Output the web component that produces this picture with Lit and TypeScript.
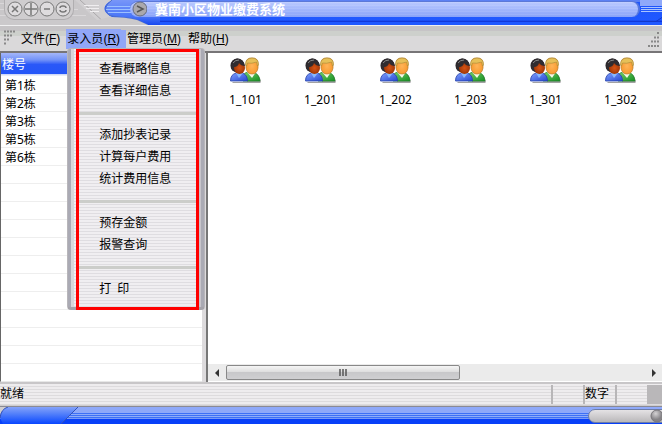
import { LitElement, html, svg, css } from "lit";
import { customElement } from "lit/decorators.js";

const windowControls = [
  { label: "关闭", glyph: svg`<path d="M5 5l6 6M11 5l-6 6"/>` },
  { label: "置顶", glyph: svg`<path d="M8 2v4M8 10v4M2 8h4M10 8h4M6 8h4M8 6v4"/>` },
  { label: "最小化", glyph: svg`<path d="M5 8h6"/>` },
  { label: "还原", glyph: svg`<path d="M5 7q0-2 3-2t3 2M5 9q0 2 3 2t3-2"/>` },
];

const menus = [
  { name: "文件", key: "F", open: false },
  { name: "录入员", key: "R", open: true },
  { name: "管理员", key: "M", open: false },
  { name: "帮助", key: "H", open: false },
];

const menuGroups = [
  ["查看概略信息", "查看详细信息"],
  ["添加抄表记录", "计算每户费用", "统计费用信息"],
  ["预存金额", "报警查询"],
  ["打\u2002印"],
];

const buildings = ["第1栋", "第2栋", "第3栋", "第5栋", "第6栋"];
const rooms = ["1_101", "1_201", "1_202", "1_203", "1_301", "1_302"];

@customElement("user-icon")
class UserIcon extends LitElement {
  static styles = css`
    :host { display: block; width: 32px; height: 28px; }
    svg { display: block; }
  `;
  render() {
    return html`<svg width="32" height="28" viewBox="2 0 32 28" aria-hidden="true">
      <defs>
        <linearGradient id="g" x2="1" y2="1"><stop offset="0" stop-color="#7bd070"/><stop offset="1" stop-color="#159020"/></linearGradient>
        <linearGradient id="b" x2="1" y2="1"><stop offset="0" stop-color="#7fa0ff"/><stop offset="1" stop-color="#2848d0"/></linearGradient>
        <radialGradient id="o"><stop offset="0" stop-color="#ffb458"/><stop offset="1" stop-color="#f89a30"/></radialGradient>
        <radialGradient id="r"><stop offset="0" stop-color="#d85414"/><stop offset="1" stop-color="#a03808"/></radialGradient>
      </defs>
      <path d="M19 25q-1-8 6-9 7 1 8 9l-1 1H5l-1-1z" fill="#666" opacity=".6"/>
      <path d="M15 24V18q2-3 7-3 7 0 9 5l1 4z" fill="url(#g)" stroke="#208028" stroke-width=".8"/>
      <path d="M19 15l5 6 4-6z" fill="#f5f8e8"/>
      <path d="M18 6q0-5 6-5t6 5v5q-1 6-6 6t-6-6z" fill="url(#o)" stroke="#b87828" stroke-width=".7"/>
      <path d="M17.500 8q0-7 6.500-7t6.500 7l-1 1-1-4q-5 2-9 1l-1 3z" fill="#e6c058" stroke="#a88838" stroke-width=".6"/>
      <path d="M2.500 24q0-7 6-8h6q5 2 5 8z" fill="url(#b)" stroke="#2440a8" stroke-width=".8"/>
      <path d="M8 16l3 5 4-5z" fill="#88b8ff"/>
      <circle cx="9.500" cy="8.500" r="7" fill="#282428"/>
      <ellipse cx="11.500" cy="11" rx="5.500" ry="6" fill="url(#r)"/>
      <path d="M3 10q0-7 6-8.500 6 0 8 7.500-4 0-6-3-1 4-5 4v4q-3-1-3-4z" fill="#302c30"/>
      <path d="M5 6q2-3 6-3" fill="none" stroke="#888" stroke-width="1"/>
    </svg>`;
  }
}

@customElement("app-root")
class AppRoot extends LitElement {
  static styles = css`
    :host {
      display: flex; flex-direction: column; min-height: 100vh; overflow: hidden;
      font: 12px/18px "Liberation Sans", "Noto Sans CJK SC", sans-serif;
      color: #000; background: #dcdadc;
    }
    * { box-sizing: border-box; }
    button { font: inherit; color: inherit; border: 0; padding: 0; background: none; text-align: left; white-space: nowrap; }

    .titlebar { display: flex; height: 25px; position: relative; background: linear-gradient(#5b80f4 0 2px, #1e55fa 2px, #2058ff 80%, #1238d8 86%, #2058ff 88%); }
    .titleart { position: absolute; left: 0; top: 0; }
    .controls {
      display: flex; position: relative; width: 70px; height: 20px; margin-left: 4px; padding: 1px 2px;
      border: 1px solid #b0aeb0; border-top: 0; border-radius: 0 0 10px 10px; background: #cfcdcf;
    }
    .controls button { width: 16px; height: 16px; }
    .controls svg { display: block; fill: #dedcde; stroke: #777; stroke-width: 1.5; }
    .caption {
      flex: 1; position: relative; display: flex; align-items: center; height: 16px; margin: 1px 0 0 56px;
      border-top: 1px solid #5b78d8; border-right: 2px solid #5678e0; border-radius: 8px;
      background: repeating-linear-gradient(#ffffff18 0 1px, transparent 1px 3px), linear-gradient(#bac9ff, #88a2f9);
    }
    .caption svg { flex: none; }
    h1 { margin: 0 0 0 8px; font-size: 13px; line-height: 16px; color: #fff; font-weight: 700; white-space: nowrap; }
    .tail { width: 22px; height: 25px; position: relative; background: linear-gradient(#8fa9fa 0 6px, transparent 6px); }
    .tail svg { display: block; }

    .menubar {
      position: relative; display: flex; align-items: center; height: 28px; padding: 2px 2px 0 3px;
      background: linear-gradient(#efeff0 0 1px, #c6c4c6 1px 6px, #cdd0cc 6px 11px, #dad9da 11px);
      border-bottom: 2px solid #777577;
    }
    .grip { width: 18px; height: 18px; }
    nav { display: flex; gap: 7px; flex: 1; }
    .entry { position: relative; }
    .entry.open > button { background: #91a7f7; box-shadow: 0 0 0 1px #91a7f7, 6px 0 0 0 #91a7f7; }
    .popup {
      position: absolute; z-index: 2; top: 18px; left: 0; width: 138px; height: 262px; padding: 0 6px 3px 9px;
      border: 1px solid #b8b6ba; border-radius: 4px;
      background: linear-gradient(90deg, #aaaab4 0 3px, #d8d6da 3px 6px, transparent 6px 130px, #c7c5cb 130px 133px, #aaaab4 133px),
        repeating-linear-gradient(#f0eef1 0 2px, #dfdde1 2px 3px);
      border-bottom: 3px solid #a5a3aa;
    }
    .marked { position: absolute; top: 0; left: 8px; width: 123px; border: 3px solid #f00; padding: 6px 0 7px; }
    .marked button { display: block; width: 100%; height: 22px; padding-left: 20px; line-height: 22px; }
    .marked hr { height: 3px; margin: 10px 0 9px; border: 0; background: #cccdca; }

    main { flex: 1; display: flex; min-height: 329px; background: #dddbdd; }
    .buildings {
      width: 202px; flex: none; border-left: 1px solid #666; border-bottom: 1px solid #e8e8e8;
      background: repeating-linear-gradient(#fff 0 17px, #eee 17px 18px) 0 23px no-repeat #fff;
    }
    table { width: 100%; border-collapse: collapse; }
    th { height: 23px; padding: 0 1px; text-align: left; font-weight: 400; color: #fff; background: linear-gradient(#a4b6fa, #7292f8 30%, #2a58f8 50%, #2456f8 90%, #e8ecf8 94%); }
    td { height: 18px; padding: 0 4px; line-height: 17px; font-family: "Noto Sans", "Noto Sans CJK SC", sans-serif; }
    .rooms { flex: 1; min-width: 0; margin-left: 4px; display: flex; flex-direction: column; background: #fff; border-left: 2px solid #777; }
    .grid { flex: 1; display: grid; grid-template-columns: repeat(auto-fill, 75px); align-content: start; padding-top: 4px; }
    .room { display: flex; flex-direction: column; align-items: center; gap: 6px; font-family: "Noto Sans", sans-serif; }
    .scroll { display: flex; align-items: center; height: 17px; background: #ebebeb; margin-bottom: 1px; }
    .scroll button { width: 18px; height: 16px; flex: none; }
    .scroll svg { display: block; margin: auto; }
    .track { flex: 1; }
    .thumb { width: 56%; height: 15px; display: flex; align-items: center; border: 1px solid #888; border-radius: 2px; background: linear-gradient(#f5f5f5, #dedede 45%, #c8c8ca 50%, #cfcfd1); }

    .status { display: flex; height: 24px; border-top: 2px solid #c8c6c8; border-bottom: 1px solid #cfcdcf; background: repeating-linear-gradient(#eeecee 0 2px, #dddbdd 2px 3px); }
    .status span { height: 19px; line-height: 18px; margin-top: 1px; }
    .ready { flex: 1; }
    .cell { width: 32px; border-left: 2px solid #b8b6b8; }
    .size { width: 15px; background: #b9b7b9; }

    .footer { display: flex; justify-content: space-between; height: 18px; border-top: 1px solid #8a8a94; background: linear-gradient(#8fa9f9 0 6px, #3e70f6 6px 7px, #8fadf8 7px 8px, #3e70f6 8px 9px, #8fadf8 9px 10px, #3e70f6 10px 11px, #7899f8 11px 12px, #073ff8 12px); }
    .footer svg { display: block; }
  `;

  render() {
    return html`
      <header class="titlebar">
        <svg class="titleart" width="160" height="25" aria-hidden="true">
          <defs>
            <linearGradient id="edge" x2="0" y2="1"><stop offset="0" stop-color="#7896f8"/><stop offset=".65" stop-color="#4a76f8"/><stop offset="1" stop-color="#1848f0"/></linearGradient>
          </defs>
          <path d="M0 0H112Q98 8 110 16L130 25H0z" fill="#d1cfd1"/>
          <path d="M0 0H75L99 22H0z" fill="#c9c7c9"/>
          <path d="M0 3.500H72M0 9.500H78M0 15.500H86M0 20.500H94" stroke="#d9d7d9"/>
          <path d="M80 0L107 25" stroke="#aaa8aa" fill="none"/>
          <path d="M84 5.500H99M86 8.500H99M90 11.500H99" stroke="#f0eef0"/>
          <path d="M112 0Q101 8 109 15Q114 17 128 18L140 25H160V0z" fill="url(#edge)"/>
          <path d="M112 0Q101 8 109 15Q114 17 128 18Q138 19 148 25" fill="none" stroke="#5070c8"/>
          <path d="M107 6.500H132M106 9.500H132M108 12.500H132" stroke="#9cc0ff"/>
          <path d="M0 25H148L137 20Q126 17 109 17L98 20 H0z" fill="#cbc9cb"/>
        </svg>
        <div class="controls">
          ${windowControls.map((c) => html`<button aria-label=${c.label}>
            <svg width="16" height="16"><circle cx="8" cy="8" r="7" stroke-width="1"/>${c.glyph}</svg>
          </button>`)}
        </div>
        <div class="caption">
          <svg width="17" height="17" aria-hidden="true">
            <circle cx="10" cy="8" r="7" fill="#aaa8ac" stroke="#666c80"/>
            <path d="M7 5l6 3-6 3" fill="none" stroke="#555" stroke-width="1.500"/>
          </svg>
          <h1>冀南小区物业缴费系统</h1>
        </div>
        <div class="tail">
          <svg width="22" height="25" aria-hidden="true">
            <path d="M1 7.500h21M1 9.500h21M1 11.500h21" stroke="#a9c4ff"/>
            <path d="M0 21.500h16l6-4" stroke="#1238c8" fill="none"/>
          </svg>
        </div>
      </header>

      <div class="menubar">
        <svg class="grip" aria-hidden="true"><path d="M1 1.500h12M1 5.500h9M1 9.500h6M1 13.500h3" stroke="#888" stroke-width="2" stroke-dasharray="2 1"/></svg>
        <nav>
          ${menus.map((m) => html`<div class="entry ${m.open ? "open" : ""}">
            <button aria-expanded=${m.open}>${m.name}(<u>${m.key}</u>)</button>
            ${m.open ? html`<div class="popup"><div class="marked" role="menu">
              ${menuGroups.map((group, i) => html`${i ? html`<hr />` : ""}${group.map((t) => html`<button role="menuitem">${t}</button>`)}`)}
            </div></div>` : ""}
          </div>`)}
        </nav>
        <svg width="12" height="18" aria-hidden="true"><path d="M9 3h2M6 7.500h5M3 11.500h8M0 16h11" stroke="#888" stroke-width="2" stroke-dasharray="2 1"/></svg>
      </div>

      <main>
        <section class="buildings">
          <table>
            <thead><tr><th scope="col">楼号</th></tr></thead>
            <tbody>${buildings.map((b) => html`<tr><td>${b}</td></tr>`)}</tbody>
          </table>
        </section>
        <section class="rooms">
          <div class="grid">
            ${rooms.map((r) => html`<div class="room"><user-icon></user-icon><span>${r}</span></div>`)}
          </div>
          <div class="scroll">
            <button aria-label="向左滚动"><svg width="8" height="8"><path d="M6 0v8L2 4z" fill="#333"/></svg></button>
            <div class="track"><div class="thumb">
              <svg width="9" height="8" aria-hidden="true"><path d="M1 0v7M4 0v7M7 0v7" stroke="#555" stroke-width="1.500"/></svg>
            </div></div>
            <button aria-label="向右滚动"><svg width="8" height="8"><path d="M3 0v8l4-4z" fill="#333"/></svg></button>
          </div>
        </section>
      </main>

      <div class="status">
        <span class="ready">就绪</span>
        <span class="cell"></span>
        <span class="cell">数字</span>
        <span class="cell"></span>
        <span class="size"></span>
      </div>

      <footer class="footer">
        <svg width="80" height="17" aria-hidden="true">
          <defs><linearGradient id="corner" x2="0" y2="1"><stop offset="0" stop-color="#84a2fa"/><stop offset=".4" stop-color="#5380fa"/><stop offset="1" stop-color="#0846ff"/></linearGradient></defs>
          <path d="M0 0h8Q1 3 0 9z" fill="#d0ced0"/>
          <path d="M8 0H78L61 17H3L0 11Q1 2 8 0z" fill="url(#corner)"/>
          <path d="M0 11Q1 2 8 0M78 0L61 17" fill="none" stroke="#3452b8"/>
        </svg>
        <svg width="74" height="17" aria-hidden="true">
          <defs>
            <linearGradient id="pill" x2="0" y2="1"><stop offset="0" stop-color="#e6e4e6"/><stop offset="1" stop-color="#b8b6b8"/></linearGradient>
            <radialGradient id="knob" cx=".4" cy=".3"><stop offset="0" stop-color="#d4d2d4"/><stop offset="1" stop-color="#858387"/></radialGradient>
          </defs>
          <rect x=".5" y="2.500" width="82" height="13" rx="6.500" fill="url(#pill)" stroke="#6c7ca8"/>
          <circle cx="69" cy="9" r="6" fill="url(#knob)" stroke="#77757a"/>
        </svg>
      </footer>
    `;
  }
}
